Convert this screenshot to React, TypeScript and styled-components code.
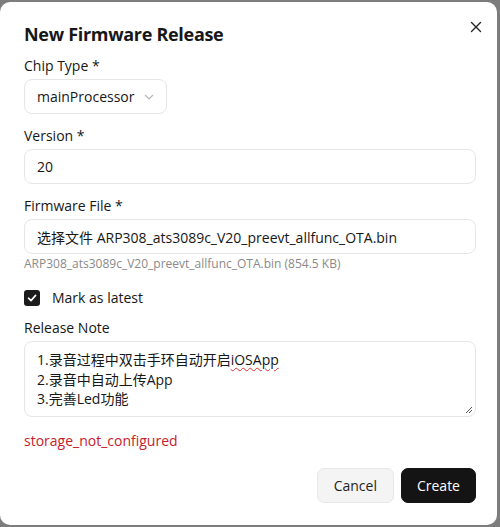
import React from 'react';
import styled, { createGlobalStyle } from 'styled-components';

const GlobalStyle = createGlobalStyle`
  html, body {
    margin: 0;
    padding: 0;
    background: #7d7d7d;
  }
  body {
    font-family: "Open Sans", "Noto Sans CJK SC", sans-serif;
    color: #171717;
  }
`;

const Page = styled.div`
  width: 500px;
  height: 527px;
  padding-top: 2px;
  box-sizing: border-box;
`;

const Dialog = styled.div`
  position: relative;
  width: 497px;
  height: 523px;
  box-sizing: border-box;
  background: #fff;
  border-radius: 10px;
  padding: 20px 21px 22px 24px;
  display: flex;
  flex-direction: column;
`;

const Title = styled.h2`
  margin: 0 0 10px;
  font-size: 18px;
  line-height: 24px;
  font-weight: 700;
  letter-spacing: -0.3px;
`;

const CloseButton = styled.button`
  position: absolute;
  top: 17px;
  right: 13px;
  width: 16px;
  height: 16px;
  padding: 0;
  border: 0;
  background: none;
  display: flex;
  align-items: center;
  justify-content: center;
  color: #262626;
`;

const Field = styled.div<{ $gap?: number }>`
  display: flex;
  flex-direction: column;
  margin-bottom: ${(p) => p.$gap ?? 12}px;
`;

const Label = styled.label`
  font-size: 14px;
  line-height: 20px;
  margin-bottom: 3px;
`;

const Control = styled.div<{ $fit?: boolean }>`
  box-sizing: border-box;
  height: 35px;
  width: ${(p) => (p.$fit ? 'fit-content' : '100%')};
  border: 1px solid #e6e6e6;
  border-radius: 8px;
  padding: 0 12px;
  display: flex;
  align-items: center;
  gap: 10px;
  font-size: 14px;
  background: #fff;
`;

const Chevron = styled.svg`
  color: #b5b5b5;
`;

const Hint = styled.div`
  font-size: 12px;
  line-height: 20px;
  color: #8a8a8a;
`;

const CheckRow = styled.label`
  display: flex;
  align-items: center;
  gap: 12px;
  font-size: 14px;
  line-height: 20px;
  margin-bottom: 10px;
`;

const Box = styled.span`
  width: 16px;
  height: 16px;
  border-radius: 3px;
  background: #1c1c1c;
  display: flex;
  align-items: center;
  justify-content: center;
`;

const NoteArea = styled.div`
  position: relative;
  box-sizing: border-box;
  height: 76px;
  border: 1px solid #e6e6e6;
  border-radius: 8px;
  padding: 8px 12px;
  font-size: 14px;
  line-height: 19.5px;
`;

const Misspelled = styled.span`
  text-decoration: underline wavy #e0302f;
  text-decoration-thickness: 1px;
  text-underline-offset: 2px;
`;

const Grip = styled.svg`
  position: absolute;
  right: 2px;
  bottom: 2px;
`;

const ErrorText = styled.div`
  margin-top: 14px;
  font-size: 14px;
  line-height: 20px;
  color: #c8202a;
`;

const Actions = styled.div`
  margin-top: auto;
  display: flex;
  justify-content: flex-end;
  gap: 7px;
`;

const Button = styled.button<{ $primary?: boolean }>`
  height: 35px;
  padding: 0 ${(p) => (p.$primary ? 15 : 16)}px;
  border-radius: 7px;
  font-family: "Open Sans", sans-serif;
  font-size: 14px;
  border: 1px solid ${(p) => (p.$primary ? '#141414' : '#e8e8e8')};
  background: ${(p) => (p.$primary ? '#141414' : '#f4f4f4')};
  color: ${(p) => (p.$primary ? '#fff' : '#1f1f1f')};
`;

const App: React.FC = () => {
  return (
    <Page>
      <GlobalStyle />
      <Dialog>
        <CloseButton aria-label="Close">
          <svg width="12" height="12" viewBox="0 0 12 12">
            <path d="M1.5 1.5 L10.5 10.5 M10.5 1.5 L1.5 10.5" stroke="currentColor" strokeWidth="1.4" strokeLinecap="round" />
          </svg>
        </CloseButton>

        <Title>New Firmware Release</Title>

        <Field>
          <Label>Chip Type *</Label>
          <Control $fit>
            mainProcessor
            <Chevron width="10" height="6" viewBox="0 0 10 6">
              <path d="M1 1 L5 5 L9 1" fill="none" stroke="currentColor" strokeWidth="1.1" />
            </Chevron>
          </Control>
        </Field>

        <Field>
          <Label>Version *</Label>
          <Control>20</Control>
        </Field>

        <Field $gap={14}>
          <Label>Firmware File *</Label>
          <Control>选择文件 ARP308_ats3089c_V20_preevt_allfunc_OTA.bin</Control>
          <Hint>ARP308_ats3089c_V20_preevt_allfunc_OTA.bin (854.5 KB)</Hint>
        </Field>

        <CheckRow>
          <Box>
            <svg width="10" height="10" viewBox="0 0 10 10">
              <path d="M1.5 5.2 L4 7.6 L8.6 2.4" fill="none" stroke="#fff" strokeWidth="1.6" strokeLinecap="round" strokeLinejoin="round" />
            </svg>
          </Box>
          Mark as latest
        </CheckRow>

        <Field $gap={0}>
          <Label>Release Note</Label>
          <NoteArea>
            <div>
              1.录音过程中双击手环自动开启<Misspelled>iOSApp</Misspelled>
            </div>
            <div>2.录音中自动上传App</div>
            <div>3.完善Led功能</div>
            <Grip width="8" height="8" viewBox="0 0 8 8">
              <path d="M7 1 L1 7 M7 4 L4 7" stroke="#555" strokeWidth="1" />
            </Grip>
          </NoteArea>
        </Field>

        <ErrorText>storage_not_configured</ErrorText>

        <Actions>
          <Button>Cancel</Button>
          <Button $primary>Create</Button>
        </Actions>
      </Dialog>
    </Page>
  );
};

export default App;
